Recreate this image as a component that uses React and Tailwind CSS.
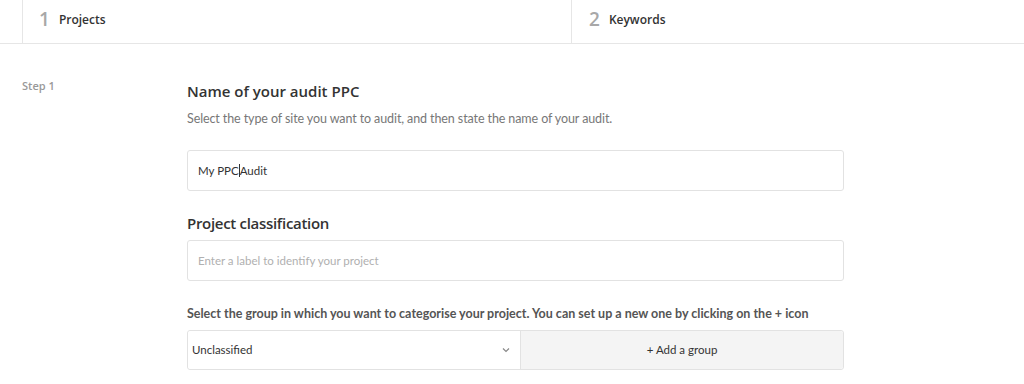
export default function App() {
  const sans = { fontFamily: '"Open Sans", "Noto Sans", sans-serif' };
  const narrow = { fontFamily: 'Lato, "Liberation Sans", sans-serif' };
  return (
    <div className="w-[1024px] h-[384px] bg-white overflow-hidden" style={sans}>
      <div className="flex h-[44px] border-b border-[#e6e6e6] pl-[22px]">
        <div className="flex items-center w-[549px] border-l border-[#e6e6e6] pl-[16px] pb-[4px] gap-[9px]">
          <span className="text-[19px] text-[#a8a8a8] font-semibold leading-none">1</span>
          <span className="text-[12px] text-[#333] font-semibold">Projects</span>
        </div>
        <div className="flex items-center flex-1 border-l border-[#e6e6e6] pl-[17px] pb-[4px] gap-[9px]">
          <span className="text-[19px] text-[#a8a8a8] font-semibold leading-none">2</span>
          <span className="text-[12px] text-[#333] font-semibold">Keywords</span>
        </div>
      </div>
      <div className="flex pt-[33px]">
        <div className="w-[187px] pl-[22px] pt-[1px] text-[11px] font-semibold text-[#999]">Step 1</div>
        <div className="w-[657px]">
          <div className="text-[15px] font-semibold text-[#333] leading-[20px] mt-[4px]">Name of your audit PPC</div>
          <div className="text-[12.5px] text-[#777] leading-[18px] mt-[9px] tracking-[-0.1px]" style={narrow}>Select the type of site you want to audit, and then state the name of your audit.</div>
          <div className="mt-[22px] h-[41px] border border-[#e2e2e2] rounded-[3px] flex items-center pl-[10px] text-[11.5px] text-[#333]" style={narrow}>
            My PPC<span className="inline-block w-px h-[13px] bg-[#333]"></span>Audit
          </div>
          <div className="text-[15px] font-semibold text-[#333] leading-[20px] mt-[22px] tracking-[-0.3px]">Project classification</div>
          <div className="mt-[7px] h-[41px] border border-[#e2e2e2] rounded-[3px] flex items-center pl-[10px] text-[11.5px] text-[#b0b0b0]" style={narrow}>
            Enter a label to identify your project
          </div>
          <div className="text-[12.5px] font-bold text-[#555] leading-[18px] mt-[24px] whitespace-nowrap" style={narrow}>Select the group in which you want to categorise your project. You can set up a new one by clicking on the + icon</div>
          <div className="mt-[7px] h-[40px] border border-[#e2e2e2] rounded-[3px] flex">
            <div className="w-[333px] flex items-center justify-between pl-[4px] pr-[10px] text-[11.5px] text-[#333] border-r border-[#e2e2e2] bg-white rounded-l-[3px]" style={narrow}>
              <span>Unclassified</span>
              <svg width="8" height="6" viewBox="0 0 8 6" fill="none" stroke="#888" strokeWidth="1.2"><path d="M1 1.5 L4 4.5 L7 1.5" /></svg>
            </div>
            <div className="flex-1 flex items-center justify-center bg-[#f4f4f4] text-[11.5px] text-[#333] rounded-r-[3px]" style={narrow}>
              + Add a group
            </div>
          </div>
        </div>
      </div>
    </div>
  );
}
